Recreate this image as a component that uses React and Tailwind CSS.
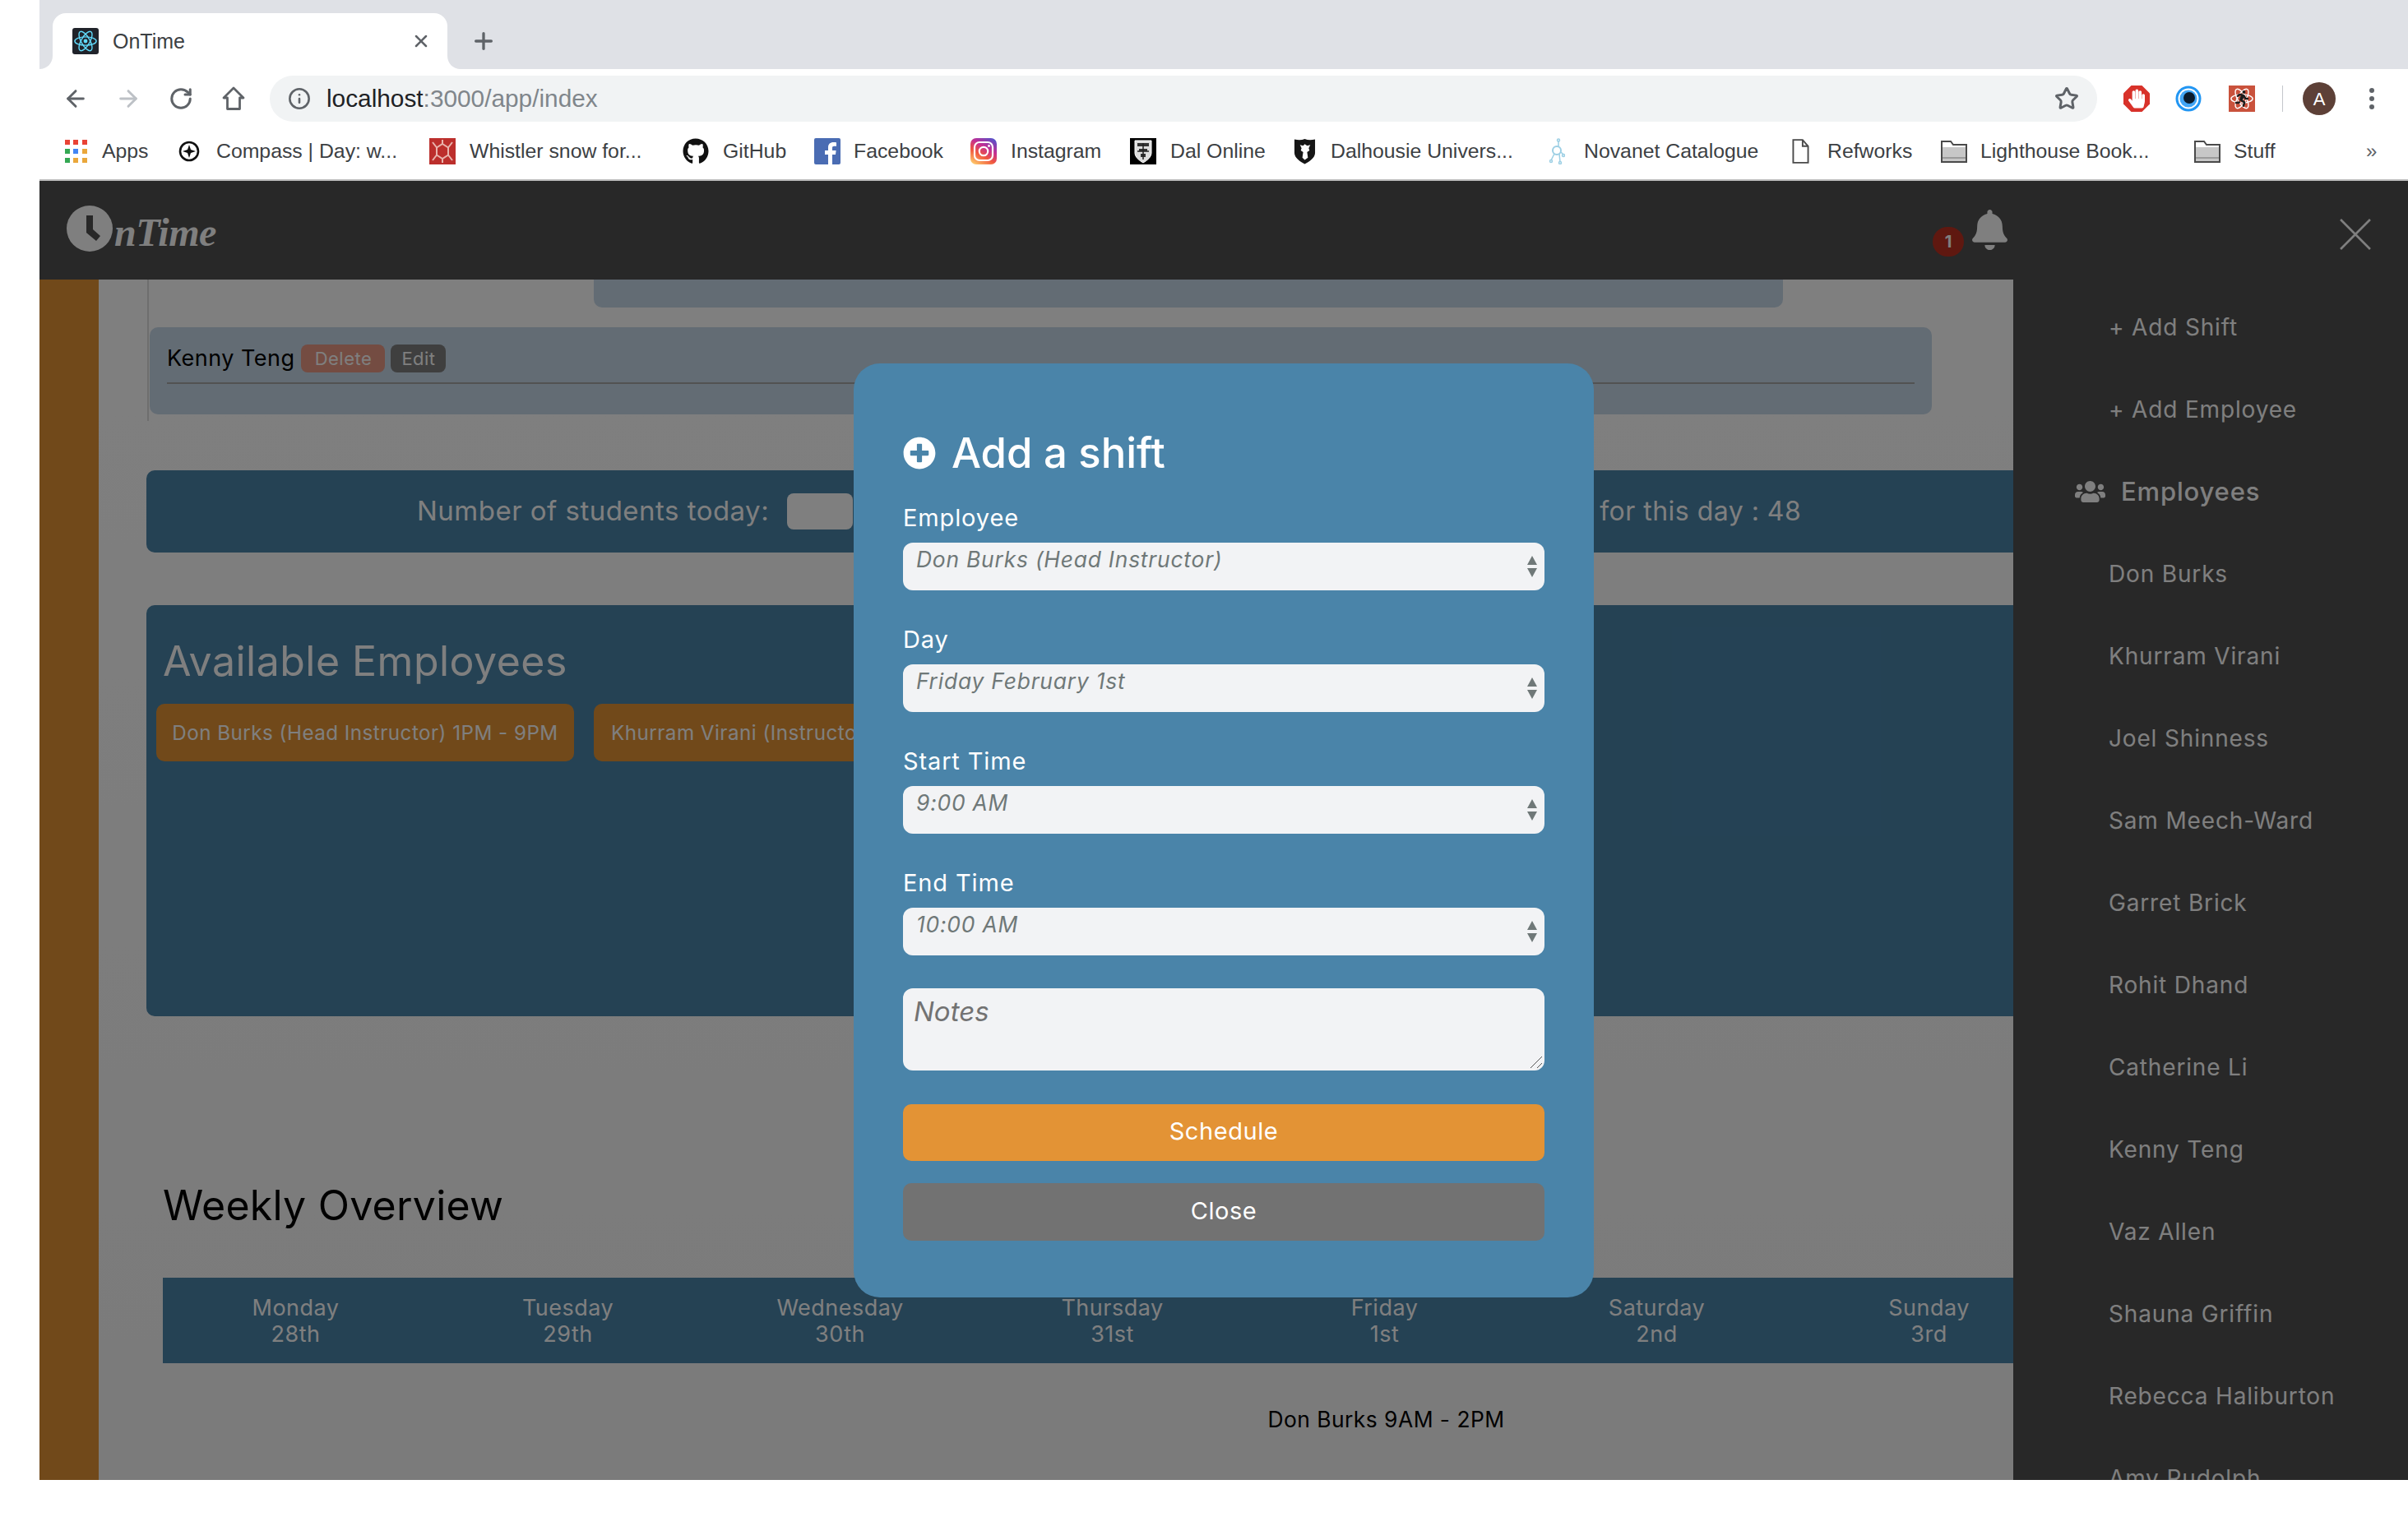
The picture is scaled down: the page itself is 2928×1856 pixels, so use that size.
import React from "react";
import { ArrowLeft, ArrowRight, RotateCw, Info, Star, X, Plus } from "lucide-react";
import { FaUsers, FaPlusCircle, FaBell, FaGithub, FaHandPaper, FaRunning } from "react-icons/fa";

const Atom = ({ c = "#61dafb", className = "" }) => (
  <svg viewBox="0 0 32 32" className={className} fill="none" stroke={c} strokeWidth="1.5">
    <ellipse cx="16" cy="16" rx="14" ry="5.5" />
    <ellipse cx="16" cy="16" rx="14" ry="5.5" transform="rotate(60 16 16)" />
    <ellipse cx="16" cy="16" rx="14" ry="5.5" transform="rotate(120 16 16)" />
    <circle cx="16" cy="16" r="2.6" fill={c} stroke="none" />
  </svg>
);

const AppsIcon = () => (
  <div className="grid grid-cols-3 gap-[5px] w-[26px]">
    {["#e94335", "#e94335", "#e94335", "#34a853", "#4285f4", "#eaa73b", "#34a853", "#eaa73b", "#eaa73b"].map((c, i) => (
      <svg key={i} viewBox="0 0 6 6" className="w-[6px] h-[6px]"><rect width="6" height="6" fill={c} /></svg>
    ))}
  </div>
);
const CompassIcon = () => (
  <svg viewBox="0 0 26 30" className="w-[26px] h-[30px]" fill="none">
    <circle cx="13" cy="15" r="11" stroke="#111" strokeWidth="2.6" />
    <path d="M13 7l2 6 6 2-6 2-2 6-2-6-6-2 6-2z" fill="#111" />
  </svg>
);
const WhistlerIcon = () => (
  <svg viewBox="0 0 32 32" className="w-[32px] h-[32px]">
    <rect width="32" height="32" fill="#bc2f2c" />
    <path d="M16 7l7 4.5v9L16 25l-7-4.5v-9zM16 2v5M16 25v5M4 5l5 6.500M28 5l-5 6.500M4 27l5-6.500M28 27l-5-6.500" fill="none" stroke="#e9b4ad" strokeWidth="2" />
  </svg>
);
const FacebookIcon = () => (
  <svg viewBox="0 0 32 32" className="w-[32px] h-[32px]">
    <rect width="32" height="32" rx="2" fill="#4a6cb3" />
    <path d="M22 32V20h4l.6-5H22v-3c0-1.400.6-2.300 2.400-2.300H27V5.300C26.500 5.200 25 5 23.300 5 19.700 5 17 7.200 17 11.300V15h-4v5h4v12z" fill="#fff" />
  </svg>
);
const InstagramIcon = () => (
  <svg viewBox="0 0 32 32" className="w-[32px] h-[32px]">
    <defs>
      <linearGradient id="ig" x1="0.2" y1="1" x2="0.8" y2="0">
        <stop offset="0" stopColor="#fdc468" />
        <stop offset="0.35" stopColor="#f0573e" />
        <stop offset="0.65" stopColor="#c32d94" />
        <stop offset="1" stopColor="#5a50c8" />
      </linearGradient>
    </defs>
    <rect width="32" height="32" rx="7" fill="url(#ig)" />
    <rect x="5" y="5" width="22" height="22" rx="6" fill="none" stroke="#fff" strokeWidth="2.200" />
    <circle cx="16" cy="16" r="5.200" fill="none" stroke="#fff" strokeWidth="2.200" />
    <circle cx="22.500" cy="9.500" r="1.400" fill="#fff" />
  </svg>
);
const DalOnlineIcon = () => (
  <svg viewBox="0 0 32 32" className="w-[32px] h-[32px]">
    <rect width="32" height="32" fill="#000" />
    <path d="M6 3h20v15c0 5-5 9-10 12-5-3-10-7-10-12z" fill="#ddd" stroke="#fff" strokeWidth="1" />
    <path d="M9 6h14v4H9zM11 13h10v3H11zM13 19h6v4h-6z" fill="#333" />
    <path d="M16 6v20M9 16h14" stroke="#222" strokeWidth="1.500" />
  </svg>
);
const DalhousieIcon = () => (
  <svg viewBox="0 0 28 32" className="w-[27px] h-[32px]">
    <path d="M1 1c5 1 9 1 13-.500 4 1.500 8 1.500 13 .500v17c0 6-7 11-13 14C8 29 1 24 1 18z" fill="#161616" />
    <path d="M14 7l3 2 4-1-2 4 1 3-3 2 1 7-4 3-3-3 1-7-3-2 1-3-2-4 4 1z" fill="#fff" />
  </svg>
);
const NovanetIcon = () => (
  <svg viewBox="0 0 20 32" className="w-[20px] h-[32px]" fill="none" stroke="#9ccfe4" strokeWidth="1.500">
    <circle cx="10" cy="15" r="5" strokeWidth="2" />
    <path d="M12 3v8M7 19L3 27M13 19l1 10M15 17l3 3" />
    <circle cx="12" cy="2.500" r="1.500" />
    <circle cx="3" cy="28" r="1.500" />
    <circle cx="14" cy="30" r="1.500" />
    <circle cx="18" cy="21" r="1.500" />
  </svg>
);
const DocIcon = () => (
  <svg viewBox="0 0 22 32" className="w-[21px] h-[32px]" fill="#fff" stroke="#4a4a4a" strokeWidth="2">
    <path d="M1.500 1.500h12l7 8v21h-19z" />
    <path d="M13.500 1.500v8h7" fill="none" />
  </svg>
);
const FolderIcon = () => (
  <svg viewBox="0 0 32 28" className="w-[32px] h-[28px]">
    <path d="M1 27V2h11l3 4h16v21z" fill="#fff" stroke="#4a4a4a" strokeWidth="2" />
    <path d="M2 9h28v17H2z" fill="#c7c7c7" />
    <path d="M2 22h28" stroke="#8c8c8c" strokeWidth="1.500" />
  </svg>
);

const bookmarks = [
  { w: "w-[138px]", gap: "gap-[19px]", icon: <AppsIcon />, label: "Apps" },
  { w: "w-[305px]", gap: "gap-[20px]", icon: <CompassIcon />, label: "Compass | Day: w..." },
  { w: "w-[308px]", gap: "gap-[17px]", icon: <WhistlerIcon />, label: "Whistler snow for..." },
  { w: "w-[160px]", gap: "gap-[17px]", icon: <FaGithub className="w-[32px] h-[32px] text-[#111]" />, label: "GitHub" },
  { w: "w-[190px]", gap: "gap-[16px]", icon: <FacebookIcon />, label: "Facebook" },
  { w: "w-[194px]", gap: "gap-[17px]", icon: <InstagramIcon />, label: "Instagram" },
  { w: "w-[199px]", gap: "gap-[17px]", icon: <DalOnlineIcon />, label: "Dal Online" },
  { w: "w-[310px]", gap: "gap-[18px]", icon: <DalhousieIcon />, label: "Dalhousie Univers..." },
  { w: "w-[296px]", gap: "gap-[23px]", icon: <NovanetIcon />, label: "Novanet Catalogue" },
  { w: "w-[181px]", gap: "gap-[22px]", icon: <DocIcon />, label: "Refworks" },
  { w: "w-[308px]", gap: "gap-[16px]", icon: <FolderIcon />, label: "Lighthouse Book..." },
  { w: "w-[120px]", gap: "gap-[16px]", icon: <FolderIcon />, label: "Stuff" },
];

function BrowserChrome() {
  return (
    <div className="ml-[48px] font-['Liberation_Sans',sans-serif] bg-white">
      <div className="h-[84px] bg-[#dfe1e6] flex items-end pl-[16px]">
        <div className="relative w-[480px] h-[68px] bg-white rounded-t-[16px] flex items-center pl-[24px] pr-[20px]">
          <svg viewBox="0 0 16 16" className="absolute left-[-16px] bottom-0 w-[16px] h-[16px]"><path d="M16 0v16H0C9 16 16 9 16 0z" fill="#fff" /></svg>
          <svg viewBox="0 0 16 16" className="absolute right-[-16px] bottom-0 w-[16px] h-[16px]"><path d="M0 0v16h16C7 16 0 9 0 0z" fill="#fff" /></svg>
          <div className="w-[32px] h-[32px] bg-[#20232a] rounded-[3px] flex items-center justify-center">
            <Atom className="w-[30px] h-[30px]" />
          </div>
          <span className="ml-[17px] mt-[2px] text-[25px] text-[#3c4043]">OnTime</span>
          <X className="ml-auto w-[24px] h-[24px] text-[#5f6368]" strokeWidth={2.500} />
        </div>
        <Plus className="ml-[28px] mb-[18px] w-[32px] h-[32px] text-[#5f6368]" strokeWidth={2.500} />
      </div>
      <div className="h-[72px] flex items-center pl-[12px]">
        <div className="w-[64px] flex justify-center"><ArrowLeft className="w-[32px] h-[32px] text-[#5f6368]" strokeWidth={2.200} /></div>
        <div className="w-[64px] flex justify-center"><ArrowRight className="w-[32px] h-[32px] text-[#bdc1c6]" strokeWidth={2.200} /></div>
        <div className="w-[64px] flex justify-center"><RotateCw className="w-[30px] h-[30px] text-[#5f6368]" strokeWidth={2.400} /></div>
        <div className="w-[64px] flex justify-center">
          <svg viewBox="0 0 28 30" className="w-[28px] h-[30px]" fill="none" stroke="#5f6368" strokeWidth="2.800" strokeLinejoin="round"><path d="M14 2L2 14h4.500v13.500h15V14H26z" /></svg>
        </div>
        <div className="ml-[12px] w-[2222px] h-[56px] bg-[#f1f3f4] rounded-full flex items-center pl-[22px] pr-[22px]">
          <Info className="w-[28px] h-[28px] text-[#5f6368]" strokeWidth={2.200} />
          <span className="ml-[19px] text-[29.800px] leading-none text-[#202124]">localhost<span className="text-[#80868b]">:3000/app/index</span></span>
          <Star className="ml-auto w-[30px] h-[30px] text-[#5f6368]" strokeWidth={2.400} />
        </div>
        <div className="ml-[32px] relative w-[32px] h-[32px] flex items-center justify-center">
          <svg viewBox="0 0 32 32" className="w-[32px] h-[32px]"><path d="M9.500 0h13L32 9.500v13L22.500 32h-13L0 22.500v-13z" fill="#d8322a" /></svg>
          <FaHandPaper className="absolute w-[20px] h-[24px] text-white" />
        </div>
        <svg viewBox="0 0 32 32" className="ml-[31px] w-[32px] h-[32px]">
          <circle cx="16" cy="16" r="15.500" fill="#2196f3" />
          <circle cx="16" cy="16" r="12.500" fill="#fff" />
          <circle cx="16" cy="16" r="10.500" fill="#42a5f5" />
          <circle cx="17" cy="15" r="7" fill="#0b1b2c" />
        </svg>
        <div className="ml-[33px] relative w-[32px] h-[32px] bg-[#c9523c] flex items-center justify-center">
          <Atom c="#fff" className="w-[30px] h-[30px]" />
          <FaRunning className="absolute w-[18px] h-[20px] text-[#1c1c1c]" />
        </div>
        <div className="ml-[33px] w-[1px] h-[32px] bg-[#c4c7cc]" />
        <div className="ml-[24px] w-[40px] h-[40px] rounded-full bg-[#5d4037] text-white text-[22px] flex items-center justify-center">A</div>
        <div className="ml-[41px] flex flex-col gap-[4px]">
          <div className="w-[6px] h-[6px] rounded-full bg-[#5f6368]" />
          <div className="w-[6px] h-[6px] rounded-full bg-[#5f6368]" />
          <div className="w-[6px] h-[6px] rounded-full bg-[#5f6368]" />
        </div>
      </div>
      <div className="h-[64px] border-b-2 border-[#bdbdbd] flex items-center pl-[31px] pb-[6px]">
        {bookmarks.map((b) => (
          <div key={b.label} className={`${b.w} ${b.gap} shrink-0 flex items-center`}>
            {b.icon}
            <span className="text-[24.800px] text-[#3c4043] whitespace-nowrap">{b.label}</span>
          </div>
        ))}
        <span className="ml-[89px] text-[24px] text-[#5f6368]">»</span>
      </div>
    </div>
  );
}

const sideItems = ["Don Burks", "Khurram Virani", "Joel Shinness", "Sam Meech-Ward", "Garret Brick", "Rohit Dhand", "Catherine Li", "Kenny Teng", "Vaz Allen", "Shauna Griffin", "Rebecca Haliburton", "Amy Rudolph"];

function Sidebar() {
  return (
    <div className="w-[480px] shrink-0 bg-[#505050] text-white pt-[8px] overflow-hidden tracking-[0.03em] text-[28px]">
      <div className="h-[100px] pl-[116px] flex items-center">+ Add Shift</div>
      <div className="h-[100px] pl-[116px] flex items-center">+ Add Employee</div>
      <div className="h-[100px] pl-[75px] flex items-center text-[31px] font-medium">
        <FaUsers className="w-[37px] h-[30px]" />
        <span className="ml-[19px]">Employees</span>
      </div>
      {sideItems.map((n) => (
        <div key={n} className="h-[100px] pl-[116px] flex items-center whitespace-nowrap">{n}</div>
      ))}
    </div>
  );
}

const days = [["Monday", "28th"], ["Tuesday", "29th"], ["Wednesday", "30th"], ["Thursday", "31st"], ["Friday", "1st"], ["Saturday", "2nd"], ["Sunday", "3rd"]];

function MainContent() {
  return (
    <div className="flex-1 min-w-0 overflow-hidden bg-linear-to-b from-white to-[#f6f6f6] pl-[58px] tracking-[0.03em]">
      <div className="h-[172px] ml-[1px] border-l-2 border-[#dcdcdc]">
        <div className="ml-[541px] w-[1446px] h-[34px] bg-[#c6d8e8] rounded-b-[10px]" />
        <div className="mt-[24px] ml-[1px] w-[2167px] h-[106px] bg-[#c6d8e8] rounded-[10px] px-[21px] pt-[21px]">
          <div className="flex items-center h-[34px] text-[27px] text-black">
            <span>Kenny Teng</span>
            <span className="ml-[8px] w-[102px] h-[34px] rounded-[8px] bg-[#e89884] text-white text-[22px] flex items-center justify-center">Delete</span>
            <span className="ml-[7px] w-[67px] h-[34px] rounded-[8px] bg-[#7e7e7e] text-white text-[22px] flex items-center justify-center">Edit</span>
          </div>
          <div className="mt-[12px] h-[2px] bg-[#a4a4a4]" />
        </div>
      </div>
      <div className="mt-[60px] h-[100px] bg-[#4a84a9] rounded-l-[10px] flex items-center pl-[329px] text-white text-[33px]">
        <span>Number of students today:</span>
        <span className="ml-[22px] w-[80px] h-[44px] rounded-[8px] bg-white" />
        <span className="ml-[908px] whitespace-nowrap text-[32px]">for this day : 48</span>
      </div>
      <div className="mt-[64px] h-[500px] bg-[#4a84a9] rounded-l-[10px] text-white">
        <h2 className="pl-[20px] pt-[40px] h-[120px] text-[50px] leading-[56px] whitespace-nowrap">Available Employees</h2>
        <div className="flex pl-[12px] gap-[24px]">
          <div className="w-[508px] h-[70px] pt-[2px] shrink-0 rounded-[10px] bg-[#e39335] text-[24.200px] flex items-center justify-center whitespace-nowrap">Don Burks (Head Instructor) 1PM - 9PM</div>
          <div className="w-[508px] h-[70px] pt-[2px] pl-[21px] shrink-0 rounded-[10px] bg-[#e39335] text-[24.200px] flex items-center whitespace-nowrap">Khurram Virani (Instructor)</div>
        </div>
      </div>
      <h2 className="mt-[200px] pl-[20px] h-[60px] text-[50px] leading-[60px] tracking-[0.25px] text-black whitespace-nowrap">Weekly Overview</h2>
      <div className="ml-[20px] mt-[58px] overflow-hidden">
        <div className="w-[2250px] h-[104px] bg-[#4a84a9] overflow-hidden">
          <div className="grid grid-cols-7 w-[2317px] -ml-[4px] pt-[21px] text-white text-[27px] leading-[32px] text-center">
            {days.map(([d, n]) => (
              <div key={d}><div>{d}</div><div>{n}</div></div>
            ))}
          </div>
        </div>
        <div className="grid grid-cols-7 w-[2317px] -ml-[4px] pt-[52px] text-black text-[26.400px] leading-[32px] text-center">
          <div className="col-start-5 pl-[4px] whitespace-nowrap">Don Burks 9AM - 2PM</div>
        </div>
      </div>
    </div>
  );
}

const Arrows = () => (
  <svg viewBox="0 0 14 26" className="w-[14px] h-[26px] mt-[16px]" fill="#6f7878">
    <path d="M7 0l6 11H1zM1 15h12L7 26z" />
  </svg>
);

function Field({ label, value }) {
  return (
    <div className="mb-[44px]">
      <div className="h-[36px] text-[29px] leading-[32px] text-white tracking-[0.03em]">{label}</div>
      <div className="mt-[10px] h-[58px] bg-[#f2f3f5] rounded-[12px] flex pl-[16px] pr-[8px]">
        <span className="mt-[2px] leading-[36px] text-[26.400px] italic text-[#6f7878] tracking-[0.03em]">{value}</span>
        <span className="ml-auto"><Arrows /></span>
      </div>
    </div>
  );
}

function Modal() {
  return (
    <div className="absolute left-[990px] top-[222px] w-[900px] h-[1136px] bg-[#4a84a9] rounded-[32px] px-[60px] pt-[84px]">
      <div className="flex items-center h-[50px] mb-[38px] text-white">
        <FaPlusCircle className="w-[40px] h-[40px]" />
        <h1 className="ml-[19px] text-[50.800px] leading-[50px] font-medium">Add a shift</h1>
      </div>
      <Field label="Employee" value="Don Burks (Head Instructor)" />
      <Field label="Day" value="Friday February 1st" />
      <Field label="Start Time" value="9:00 AM" />
      <div className="-mb-[4px]"><Field label="End Time" value="10:00 AM" /></div>
      <div className="relative w-[780px] h-[100px]">
        <textarea
          readOnly
          placeholder="Notes"
          className="block w-[780px] h-[100px] resize-none bg-[#f2f3f5] rounded-[12px] px-[13px] pt-[4px] pb-[8px] text-[33px] italic text-[#727272] placeholder:text-[#727272] outline-none"
        />
        <svg viewBox="0 0 16 16" className="absolute right-[2px] bottom-[2px] w-[16px] h-[16px]" fill="none" stroke="#555" strokeWidth="1">
          <path d="M1 15L15 1M9 15l6-6" />
        </svg>
      </div>
      <button className="block mt-[41px] pb-[3px] w-[780px] h-[69px] bg-[#e39335] rounded-[10px] text-white text-[29px] tracking-[0.02em]">Schedule</button>
      <button className="block mt-[27px] pb-[3px] w-[780px] h-[70px] bg-[#727272] rounded-[10px] text-white text-[29px] tracking-[0.02em]">Close</button>
    </div>
  );
}

export default function App() {
  return (
    <div className="w-[2928px] h-[1856px] bg-white overflow-hidden font-['Inter',sans-serif]">
      <BrowserChrome />
      <div className="relative ml-[48px] h-[1580px] flex flex-col overflow-hidden">
        <div className="h-[120px] shrink-0 bg-[#505050] flex items-start pl-[33px] text-white">
          <div className="flex items-center h-[116px]">
            <svg viewBox="0 0 56 56" className="w-[56px] h-[56px]">
              <circle cx="28" cy="28" r="28" fill="#fff" />
              <path d="M24 12h8v17l9 8-5 6-12-10z" fill="#505050" />
            </svg>
            <span className="ml-[2px] mt-[10px] font-['Liberation_Serif',serif] italic font-bold text-[48px] leading-none tracking-[-0.01em]">nTime</span>
          </div>
          <div className="ml-auto flex items-start">
            <div className="mt-[56px] w-[38px] h-[36px] rounded-full bg-[#be3020] flex items-center justify-center text-[20px] font-bold">1</div>
            <FaBell className="mt-[35px] ml-[9px] w-[45px] h-[49px]" />
            <svg viewBox="0 0 36 36" className="mt-[46px] ml-[403px] mr-[45px] w-[38px] h-[38px]" fill="none" stroke="#fff" strokeWidth="2.500"><path d="M1 1l34 34M35 1L1 35" /></svg>
          </div>
        </div>
        <div className="flex flex-1 min-h-0">
          <div className="w-[72px] shrink-0 bg-[#e39335]" />
          <MainContent />
          <Sidebar />
        </div>
        <div className="absolute inset-0 bg-black/50" />
        <Modal />
      </div>
    </div>
  );
}
